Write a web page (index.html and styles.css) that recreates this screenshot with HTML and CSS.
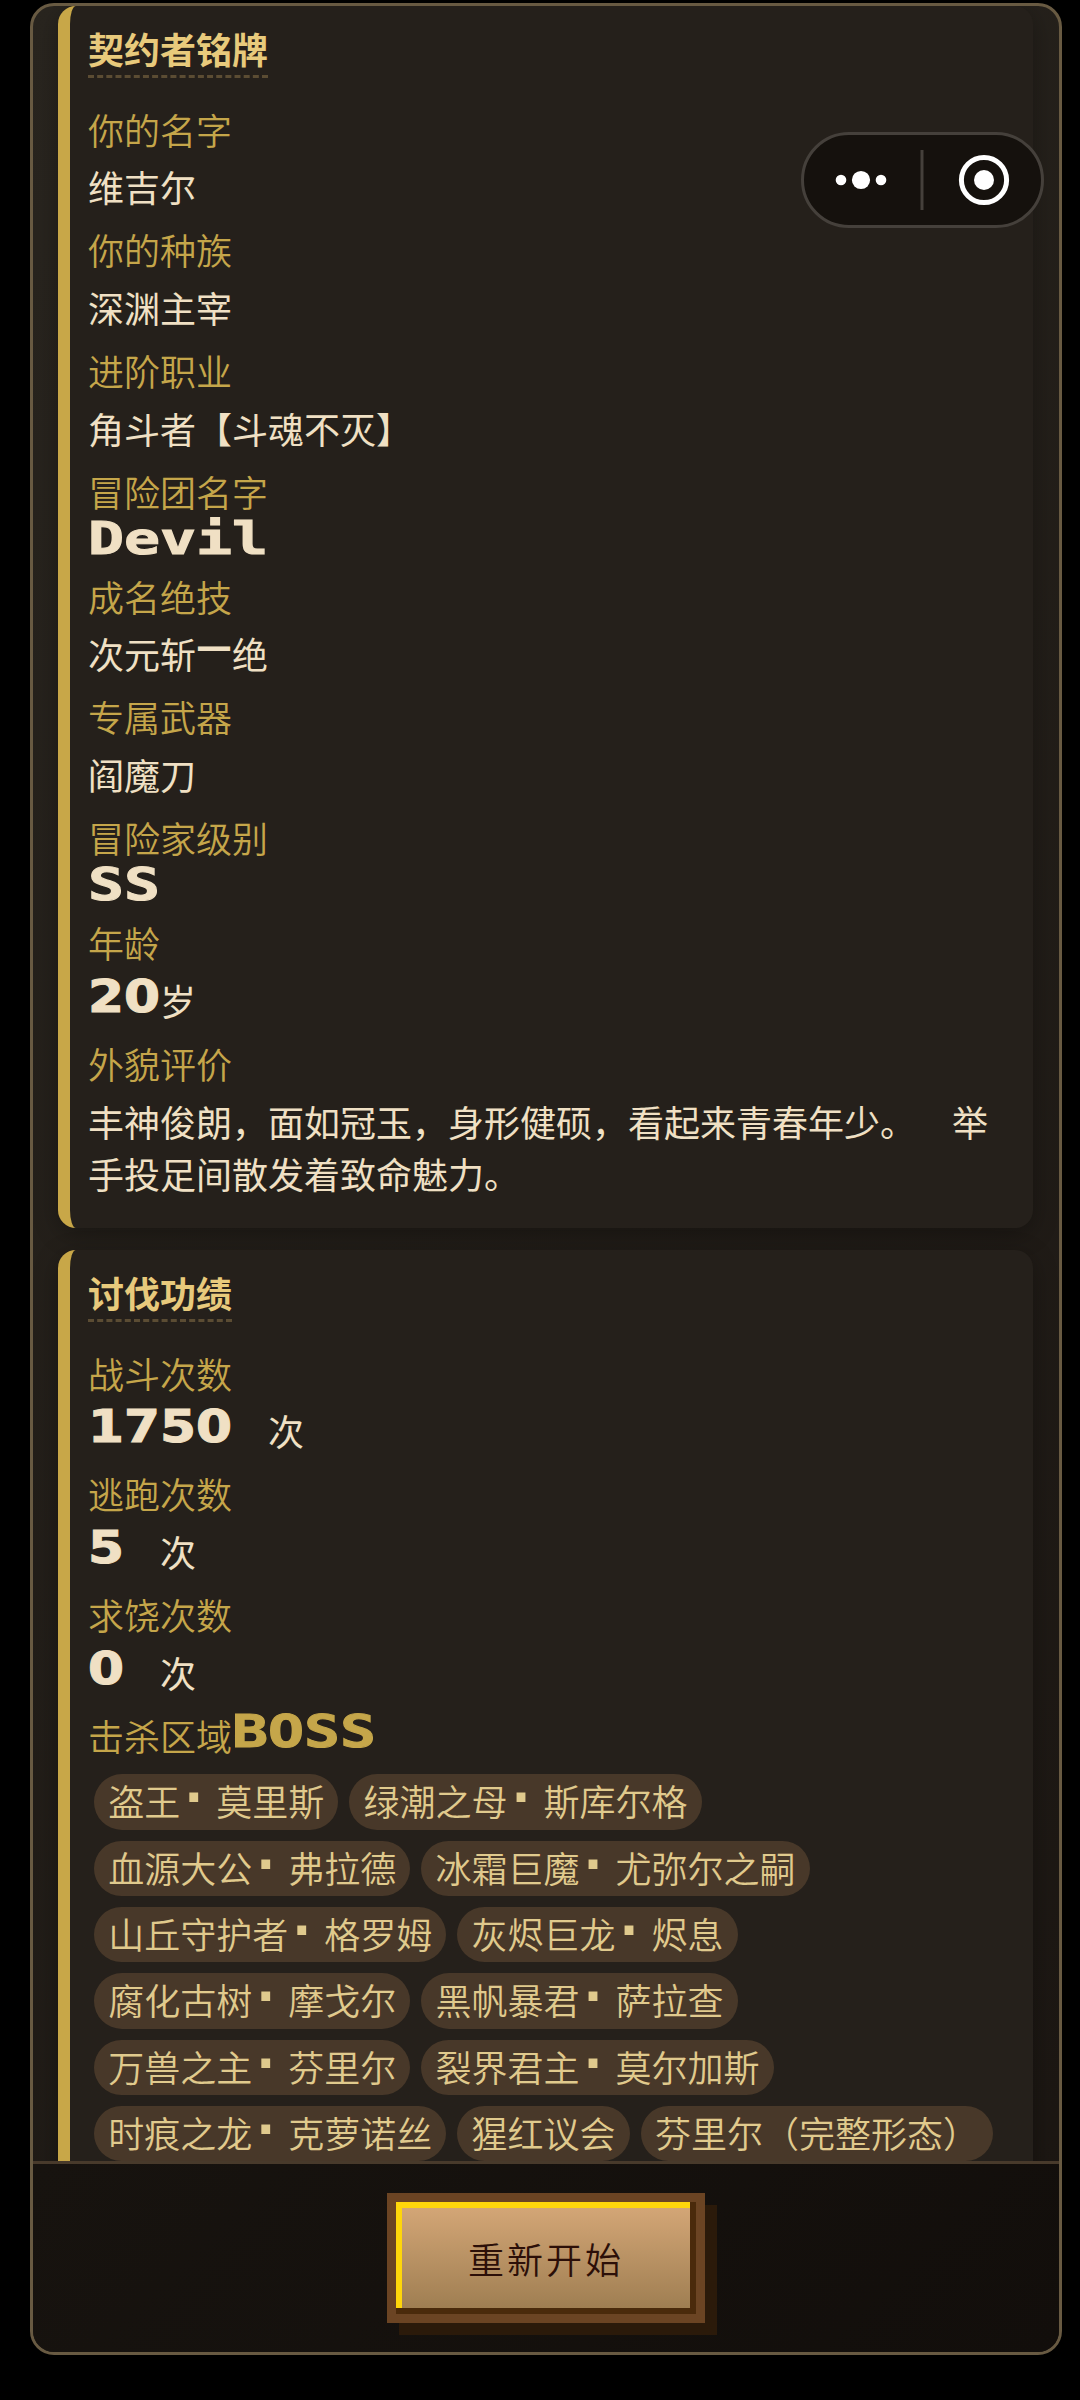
FILE: index.html
```html
<!DOCTYPE html>
<html lang="zh-CN">
<head>
<meta charset="utf-8">
<title>契约者铭牌</title>
<link rel="stylesheet" href="styles.css">
</head>
<body>
<main class="panel">
  <div class="scroll">
    <section class="card">
      <h2 class="title">契约者铭牌</h2>
      <div class="field"><div class="label">你的名字</div><div class="value">维吉尔</div></div>
      <div class="field"><div class="label">你的种族</div><div class="value">深渊主宰</div></div>
      <div class="field"><div class="label">进阶职业</div><div class="value">角斗者【斗魂不灭】</div></div>
      <div class="field"><div class="label">冒险团名字</div><div class="value latin"><span class="px w5">Devil</span></div></div>
      <div class="field"><div class="label">成名绝技</div><div class="value">次元斩<span class="dash">—</span>绝</div></div>
      <div class="field"><div class="label">专属武器</div><div class="value">阎魔刀</div></div>
      <div class="field"><div class="label">冒险家级别</div><div class="value latin"><span class="px w2">SS</span></div></div>
      <div class="field"><div class="label">年龄</div><div class="value"><span class="px num w2">20</span>岁</div></div>
      <div class="field"><div class="label">外貌评价</div><div class="value">丰神俊朗，面如冠玉，身形健硕，看起来青春年少。&#12288;举手投足间散发着致命魅力。</div></div>
    </section>
    <section class="card">
      <h2 class="title">讨伐功绩</h2>
      <div class="field"><div class="label">战斗次数</div><div class="value"><span class="px num w4">1750</span>&#12288;次</div></div>
      <div class="field"><div class="label">逃跑次数</div><div class="value"><span class="px num w1">5</span>&#12288;次</div></div>
      <div class="field"><div class="label">求饶次数</div><div class="value"><span class="px num w1">0</span>&#12288;次</div></div>
      <div class="field">
        <div class="label">击杀区域<span class="px w4">BOSS</span></div>
        <div class="tags">
          <span class="tag">盗王<i class="dot">·</i>莫里斯</span>
          <span class="tag">绿潮之母<i class="dot">·</i>斯库尔格</span>
          <span class="tag">血源大公<i class="dot">·</i>弗拉德</span>
          <span class="tag">冰霜巨魔<i class="dot">·</i>尤弥尔之嗣</span>
          <span class="tag">山丘守护者<i class="dot">·</i>格罗姆</span>
          <span class="tag">灰烬巨龙<i class="dot">·</i>烬息</span>
          <span class="tag">腐化古树<i class="dot">·</i>摩戈尔</span>
          <span class="tag">黑帆暴君<i class="dot">·</i>萨拉查</span>
          <span class="tag">万兽之主<i class="dot">·</i>芬里尔</span>
          <span class="tag">裂界君主<i class="dot">·</i>莫尔加斯</span>
          <span class="tag">时痕之龙<i class="dot">·</i>克萝诺丝</span>
          <span class="tag">猩红议会</span>
          <span class="tag">芬里尔（完整形态）</span>
        </div>
      </div>
    </section>
  </div>
  <footer class="footer"><button class="restart" type="button">重新开始</button></footer>
</main>
<div class="capsule">
  <svg width="243" height="96" viewBox="0 0 243 96" fill="#fff">
    <rect x="1.5" y="1.5" width="240" height="93" rx="46.5" fill="#15110d" stroke="#45403b" stroke-width="3"/>
    <circle cx="40" cy="48" r="5.3"/>
    <circle cx="60" cy="48" r="9.1"/>
    <circle cx="80" cy="48" r="5.3"/>
    <rect x="119.5" y="18" width="3" height="60" fill="#45403b"/>
    <circle cx="183" cy="48" r="22.6" fill="none" stroke="#fff" stroke-width="5"/>
    <circle cx="183" cy="48" r="10"/>
  </svg>
</div>
</body>
</html>
```
FILE: styles.css
```css
* { box-sizing: border-box; }

body {
  margin: 0;
  height: 2400px;
  padding: 3px 18px 45px 30px;
  background: #000;
  overflow: hidden;
  font-family: "Noto Sans CJK SC", sans-serif;
  font-size: 36px;
  font-weight: 350;
  line-height: 52px;
  text-spacing-trim: space-all;
}

.panel {
  display: flex;
  flex-direction: column;
  height: 2352px;
  border: 3px solid #685a42;
  border-radius: 24px;
  background: linear-gradient(135deg, #29251f, #1b1612);
  overflow: hidden;
}

.scroll {
  flex: 1;
  min-height: 0;
  overflow: hidden;
  padding: 0 26px 0 25px;
  display: flex;
  flex-direction: column;
  gap: 22px;
}

.card {
  flex: none;
  padding: 20px 18px 18.5px;
  border-left: 12px solid #c8a748;
  border-radius: 18px;
  background: #25201b;
  box-shadow: 0 6px 24px rgba(0, 0, 0, .3);
}

.title {
  display: block;
  width: fit-content;
  margin: 0 0 24.5px;
  padding-bottom: 5px;
  border-bottom: 3px dashed #5b4c33;
  color: #e8ca7c;
  font-size: 36px;
  font-weight: 700;
  line-height: 44px;
}

.field { margin-bottom: 11px; }

.label {
  height: 52px;
  margin-bottom: 5.8px;
  color: #c5a64a;
}

.value { color: #f0e0c4; font-weight: 400; }

.latin { height: 36px; line-height: 36px; }

.px {
  display: inline-block;
  height: 32px;
  font: 700 44px/32px "DejaVu Sans Mono", monospace;
  white-space: nowrap;
  transform: scaleX(1.359);
  transform-origin: 0 50%;
  vertical-align: 4px;
  -webkit-text-stroke: 1px currentColor;
}

.num {
  font-family: "DejaVu Sans", sans-serif;
  transform: scaleX(1.176);
}

.w1 { width: 36px; }
.w2 { width: 72px; }
.w4 { width: 144px; }
.w5 { width: 180px; }

.dash {
  font: 700 36px/0 "DejaVu Sans", sans-serif;
  vertical-align: 10px;
}

.tags {
  display: flex;
  flex-wrap: wrap;
  gap: 11px;
  padding: 7.5px 0 0 6px;
}

.tag {
  height: 55.3px;
  padding: 0 14.2px;
  border-radius: 28px;
  background: #483829;
  color: #e0ca8d;
  line-height: 53px;
  white-space: nowrap;
}

.dot {
  display: inline-block;
  width: 27px;
  margin-right: 9px;
  font: 700 50px/0 "DejaVu Sans", sans-serif;
  text-align: center;
  vertical-align: 1px;
}

.footer {
  flex: none;
  height: 191px;
  padding-top: 29px;
  border-top: 3px solid #483a2b;
  background: linear-gradient(135deg, #17130f, #120e0b);
  text-align: center;
}

.restart {
  width: 318px;
  height: 130px;
  padding: 0;
  border: 9px solid #6b4423;
  border-radius: 0;
  background: linear-gradient(#d6a878, #9c7c50);
  box-shadow:
    inset -6px -6px 0 #4a2a0b,
    inset 6px 6px 0 #ffd60a,
    12px 12px 0 #2b1a0a;
  color: #2c0f08;
  font: 350 36px/52px "Noto Sans CJK SC", sans-serif;
  letter-spacing: 3px;
}

.capsule {
  position: absolute;
  left: 801px;
  top: 132px;
  width: 243px;
  height: 96px;
}
```
